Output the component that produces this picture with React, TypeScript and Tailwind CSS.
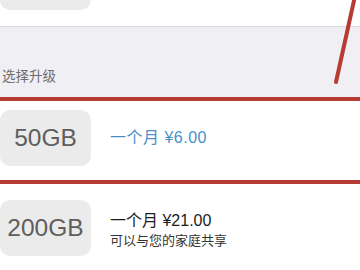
import React from 'react';

// iCloud 储存空间升级 — 截图复刻
const LATIN = "'Liberation Sans', 'Noto Sans CJK SC', sans-serif";

function SizeBox({ label }: { label?: string }) {
  return (
    <div
      className="flex h-[56px] w-[91px] shrink-0 items-center justify-center rounded-[10px] bg-[#ebebeb] text-[24.5px] text-[#5e5e5e]"
      style={{ fontFamily: LATIN }}
    >
      {label}
    </div>
  );
}

export default function App() {
  return (
    <div className="relative h-[270px] w-[360px] overflow-hidden bg-white" style={{ fontFamily: LATIN }}>
      {/* 上一个套餐（被裁切） */}
      <div className="h-[27px] overflow-hidden border-b border-[#dcdce0]">
        <div className="-mt-[46px]">
          <SizeBox />
        </div>
      </div>

      {/* 分组标题 */}
      <div className="flex h-[70px] items-end bg-[#efeff4] pb-[11px] pl-[2px]">
        <span className="text-[13.5px] leading-[18px] text-[#6d6d72]">选择升级</span>
      </div>

      {/* 50GB — 红框标注 */}
      <div className="flex gap-[19px] border-y-4 border-[#b73a33] pb-[14px] pt-[9px]">
        <SizeBox label="50GB" />
        <div className="flex items-center">
          <span className="text-[16px] tracking-[0.5px] text-[#4a90c6]">一个月 ¥6.00</span>
        </div>
      </div>

      {/* 200GB */}
      <div className="flex gap-[19px] pt-[16px]">
        <SizeBox label="200GB" />
        <div className="flex flex-col justify-center pt-[4px]">
          <span className="text-[16px] leading-[22px] text-[#1c1c1c]">一个月 ¥21.00</span>
          <span className="text-[13px] leading-[18px] text-[#333]">可以与您的家庭共享</span>
        </div>
      </div>

      {/* 手绘红线标注 */}
      <svg className="pointer-events-none absolute left-0 top-0" width="360" height="270">
        <line x1="355" y1="-4" x2="336" y2="82" stroke="#b73a33" strokeWidth="4" strokeLinecap="round" />
      </svg>
    </div>
  );
}
